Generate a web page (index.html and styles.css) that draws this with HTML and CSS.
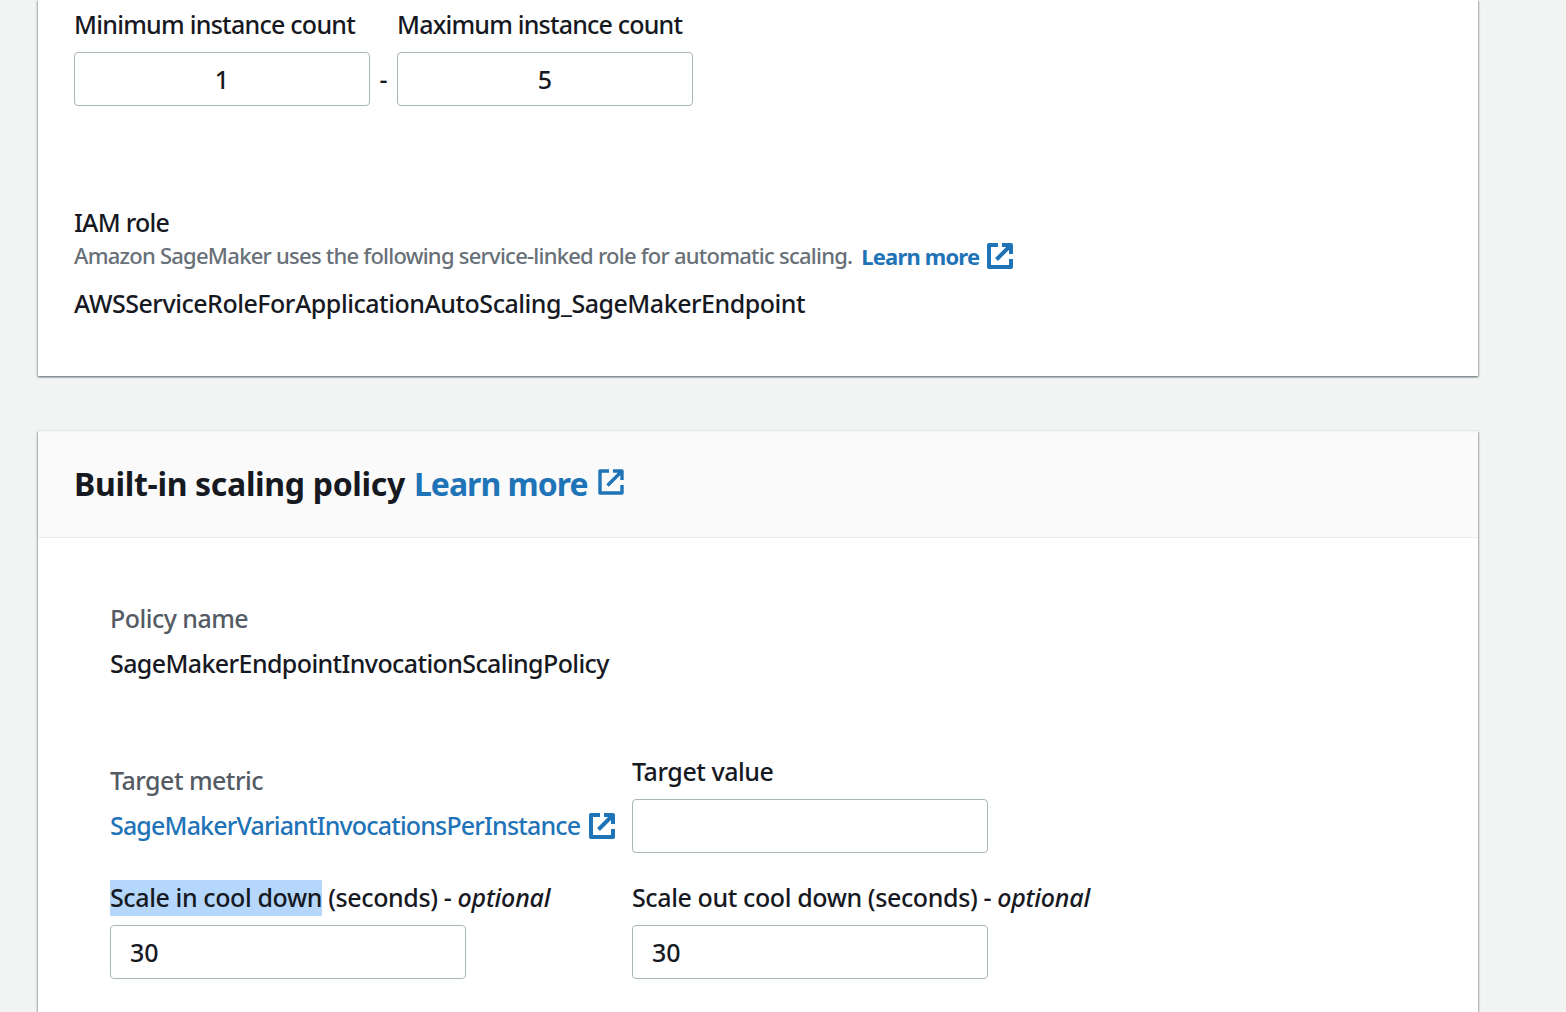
FILE: index.html
```html
<!DOCTYPE html>
<html lang="en">
<head>
<meta charset="utf-8">
<title>Configure automatic scaling</title>
<link rel="stylesheet" href="styles.css">
</head>
<body>
<svg class="sprite" aria-hidden="true">
  <symbol id="external" viewBox="0 0 26 26">
    <path d="M11 2H2v22h22v-8M15 2h9v9M23 3L9.5 16.5" fill="none" stroke="currentColor" stroke-linejoin="round"/>
  </symbol>
</svg>
<main class="page">
  <section class="card card-variant">
    <div class="counts">
      <label class="count"><span class="label t-min">Minimum instance count</span><input class="input input-center" value="1"></label>
      <span class="dash">-</span>
      <label class="count"><span class="label t-max">Maximum instance count</span><input class="input input-center" value="5"></label>
    </div>
    <div class="role">
      <div class="label t-min">IAM role</div>
      <div class="hint"><span class="t-hint">Amazon SageMaker uses the following service-linked role for automatic scaling.</span><a class="link hint-link"><span class="t-learn">Learn more</span><svg class="icon"><use href="#external"/></svg></a></div>
      <div class="label value t-role">AWSServiceRoleForApplicationAutoScaling_SageMakerEndpoint</div>
    </div>
  </section>
  <section class="card">
    <header class="card-header"><h2 class="title">Built-in scaling policy</h2><a class="link title-link"><span class="t-tlearn">Learn more</span><svg class="icon icon-thin"><use href="#external"/></svg></a></header>
    <div class="policy">
      <div class="label muted">Policy name</div>
      <div class="label policy-name">SageMakerEndpointInvocationScalingPolicy</div>
      <div class="grid">
        <div class="metric">
          <div class="label muted">Target metric</div>
          <a class="metric-link"><span class="label t-variant">SageMakerVariantInvocationsPerInstance</span><svg class="icon"><use href="#external"/></svg></a>
        </div>
        <label class="field"><span class="label t-value">Target value</span><input class="input"></label>
        <label class="field"><span class="label t-cool"><mark>Scale in cool down</mark> (seconds) - <em>optional</em></span><input class="input" value="30"></label>
        <label class="field"><span class="label t-cool">Scale out cool down (seconds) - <em>optional</em></span><input class="input" value="30"></label>
      </div>
    </div>
  </section>
</main>
</body>
</html>
```
FILE: styles.css
```css
* { box-sizing: border-box; }
body { margin: 0; height: 1012px; overflow: hidden; background: #f2f3f3; color: #16191f; font: 500 25px/34px "Noto Sans", sans-serif; }
.sprite { position: absolute; width: 0; height: 0; }
.page { display: flex; flex-direction: column; gap: 55px; width: 1440px; margin-left: 38px; }
.card { background: #fff; box-shadow: 0 1px 2px rgba(0,28,36,.4), 1px 1px 2px rgba(0,28,36,.2), -1px 1px 2px rgba(0,28,36,.2); }
.card-variant { height: 376px; padding: 7px 36px 0; }
.label { display: block; height: 36px; white-space: pre; }
.input { display: block; width: 356px; height: 54px; margin: 9px 0 0; padding: 0 19px; border: 1px solid #aab7b8; border-radius: 4px; background: #fff; color: inherit; font: inherit; outline: 0; }
.counts { display: flex; align-items: flex-end; }
.count { width: 296px; }
.count .input { width: 296px; }
.input-center { text-align: center; }
.dash { width: 27px; height: 44px; text-align: center; }
.role { margin-top: 99px; }
.hint { display: flex; height: 30px; align-items: center; color: #687078; font-size: 22px; }
.hint span { height: 36px; }
.hint .t-learn { height: 34px; }
.link { display: flex; align-items: center; color: #1f73b7; font-weight: 700; }
.hint-link { margin-left: 9px; gap: 8px; }
.icon { flex: none; width: 26px; height: 26px; color: #1f73b7; stroke-width: 4; }
.icon-thin { stroke-width: 3.4; margin-bottom: 4px; }
.hint .icon { margin-bottom: 1px; }
.value { margin-top: 15px; }
.card-header { display: flex; align-items: center; height: 107px; padding: 0 36px 1px; background: #fafafa; border-top: 1px solid #f4f5f5; border-bottom: 1px solid #eaeded; gap: 9px; }
.title, .title-link { margin: 0; font-size: 32px; font-weight: 700; line-height: 36px; }
.title { letter-spacing: -.32px; }
.title-link { gap: 10px; }
.policy { height: 474px; padding: 63px 72px 0; }
.muted { color: #545b64; letter-spacing: -.53px; }
.policy-name { margin-top: 9px; letter-spacing: -.61px; }
.grid { display: grid; grid-template-columns: 522px 1fr; row-gap: 27px; margin-top: 72px; }
.metric { padding-top: 9px; }
.metric-link { display: flex; align-items: center; gap: 9px; margin-top: 9px; color: #1f73b7; }
mark { display: inline-block; height: 36px; background: #b5d7fb; color: inherit; }
em { font-style: italic; letter-spacing: -.2px; }
.t-min { letter-spacing: -.74px; }
.t-max { letter-spacing: -.8px; }
.t-hint { letter-spacing: -.76px; }
.t-learn { letter-spacing: -.82px; }
.t-role { letter-spacing: -.48px; }
.t-tlearn { letter-spacing: -1px; }
.t-variant { letter-spacing: -.84px; }
.t-value { letter-spacing: -.45px; }
.t-cool { letter-spacing: -.39px; }
```
